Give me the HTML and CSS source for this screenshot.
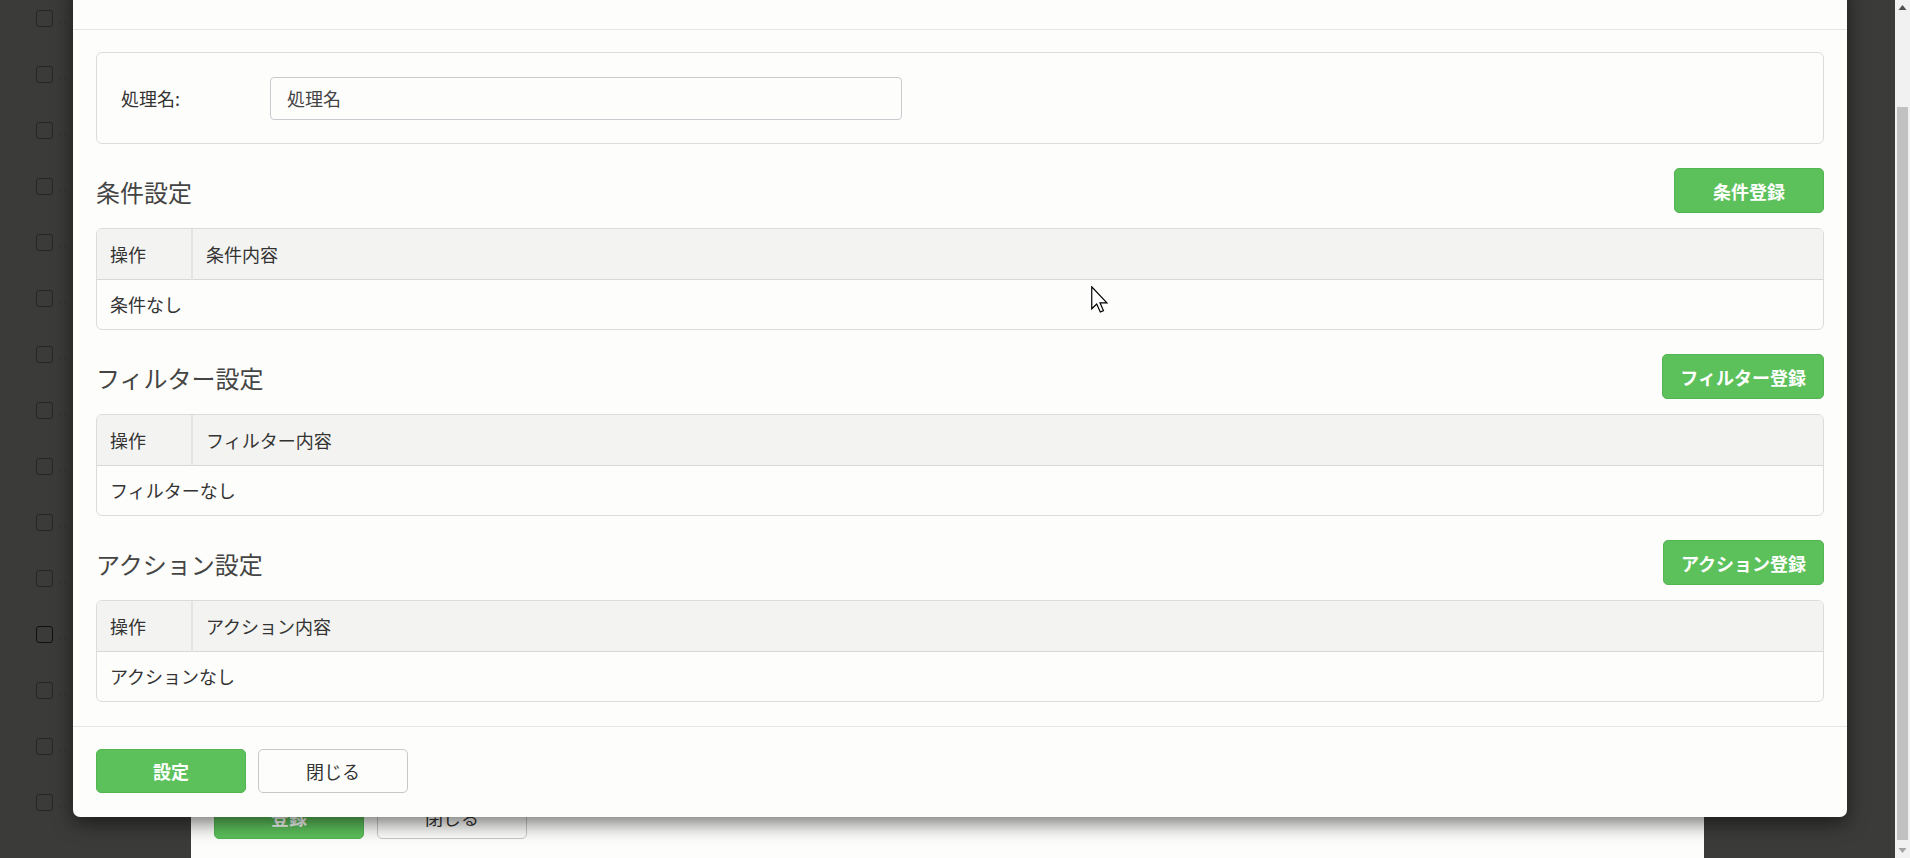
FILE: index.html
```html
<!DOCTYPE html>
<html lang="ja">
<head>
<meta charset="utf-8">
<title>処理設定</title>
<link rel="stylesheet" href="styles.css">
</head>
<body>
<div class="screen">
  <div class="viewport">
    <ul class="bg-list">
      <li><span class="cb"></span><span class="dots">..</span></li>
      <li><span class="cb"></span><span class="dots">..</span></li>
      <li><span class="cb"></span><span class="dots">..</span></li>
      <li><span class="cb"></span><span class="dots">..</span></li>
      <li><span class="cb"></span><span class="dots">..</span></li>
      <li><span class="cb"></span><span class="dots">..</span></li>
      <li><span class="cb"></span><span class="dots">..</span></li>
      <li><span class="cb"></span><span class="dots">..</span></li>
      <li><span class="cb"></span><span class="dots">..</span></li>
      <li><span class="cb"></span><span class="dots">..</span></li>
      <li><span class="cb"></span><span class="dots">..</span></li>
      <li><span class="cb cb-dark"></span><span class="dots">..</span></li>
      <li><span class="cb"></span><span class="dots">..</span></li>
      <li><span class="cb"></span><span class="dots">..</span></li>
      <li><span class="cb"></span><span class="dots">..</span></li>
    </ul>

    <div class="modal-back">
      <div class="back-footer">
        <button class="btn btn-success btn-back">登録</button>
        <button class="btn btn-default btn-back">閉じる</button>
      </div>
    </div>

    <div class="modal">
      <div class="modal-header"></div>
      <div class="modal-body">
        <div class="form-box">
          <label class="form-label" for="name">処理名:</label>
          <input class="form-input" id="name" type="text" value="処理名">
        </div>

        <section class="section">
          <div class="section-head">
            <h4 class="section-title">条件設定</h4>
            <button class="btn btn-success">条件登録</button>
          </div>
          <div class="table-wrap">
            <table class="grid">
              <thead><tr><th class="col-op">操作</th><th>条件内容</th></tr></thead>
              <tbody><tr><td colspan="2">条件なし</td></tr></tbody>
            </table>
          </div>
        </section>

        <section class="section">
          <div class="section-head">
            <h4 class="section-title">フィルター設定</h4>
            <button class="btn btn-success">フィルター登録</button>
          </div>
          <div class="table-wrap">
            <table class="grid">
              <thead><tr><th class="col-op">操作</th><th>フィルター内容</th></tr></thead>
              <tbody><tr><td colspan="2">フィルターなし</td></tr></tbody>
            </table>
          </div>
        </section>

        <section class="section">
          <div class="section-head">
            <h4 class="section-title">アクション設定</h4>
            <button class="btn btn-success">アクション登録</button>
          </div>
          <div class="table-wrap">
            <table class="grid">
              <thead><tr><th class="col-op">操作</th><th>アクション内容</th></tr></thead>
              <tbody><tr><td colspan="2">アクションなし</td></tr></tbody>
            </table>
          </div>
        </section>
      </div>
      <div class="modal-footer">
        <button class="btn btn-success">設定</button>
        <button class="btn btn-default">閉じる</button>
      </div>
    </div>

    <svg class="cursor" width="18" height="27" viewBox="0 0 12 18" aria-hidden="true">
      <path d="M0.5 0.5 L0.5 15.2 L3.8 12 L6.2 17.3 L8.3 16.4 L6 11.2 L10.6 11.2 Z" fill="#fff" stroke="#000" stroke-width="0.8" stroke-linejoin="miter"/>
    </svg>
  </div>

  <div class="scrollbar">
    <div class="sb-arrow">
      <svg width="15" height="15" viewBox="0 0 15 15"><path d="M3.5 10 L7.5 5 L11.5 10 Z" fill="#505050"/></svg>
    </div>
    <div class="sb-track"><div class="sb-thumb"></div></div>
    <div class="sb-arrow">
      <svg width="15" height="15" viewBox="0 0 15 15"><path d="M3.5 5 L7.5 10 L11.5 5 Z" fill="#a3a3a3"/></svg>
    </div>
  </div>
</div>
</body>
</html>
```

FILE: styles.css
```css
* { box-sizing: border-box; }

html, body {
  margin: 0;
  padding: 0;
  width: 1910px;
  height: 858px;
  overflow: hidden;
}

body {
  font-family: "Noto Sans CJK JP", "Noto Sans", sans-serif;
  font-size: 18px;
  color: #333;
  background: #3a3a38;
}

.screen {
  display: flex;
  width: 1910px;
  height: 858px;
}

.viewport {
  position: relative;
  width: 1895px;
  height: 858px;
  overflow: hidden;
  background: #3b3b39;
}

/* background list (dimmed page) */
.bg-list {
  list-style: none;
  margin: 0;
  padding: 10px 0 0 36px;
}

.bg-list li {
  display: flex;
  align-items: flex-start;
  gap: 6px;
  height: 56px;
}

.cb {
  display: block;
  width: 17px;
  height: 17px;
  border: 1.5px solid #262626;
  border-radius: 3px;
}

.cb-dark { border-color: #111; }

.dots {
  font-size: 10px;
  line-height: 17px;
  color: #2a2a2a;
  letter-spacing: 2px;
}

/* modal behind */
.modal-back {
  position: absolute;
  left: 191px;
  top: 700px;
  width: 1513px;
  height: 300px;
  background: #fdfdfb;
  padding-top: 94px;
}

.back-footer {
  display: flex;
  gap: 13px;
  padding-left: 23px;
}

.btn-back { width: 149px; min-width: 0; }

/* front modal */
.modal {
  position: absolute;
  left: 73px;
  top: -20px;
  width: 1774px;
  background: #fdfdfb;
  border-radius: 7px;
  box-shadow: 0 6px 20px rgba(0, 0, 0, 0.55);
}

.modal-header {
  height: 50px;
  border-bottom: 1px solid #e6e6e6;
}

.modal-body {
  padding: 22px 23px 24px;
}

.form-box {
  display: flex;
  align-items: center;
  height: 92px;
  padding: 0 24px;
  border: 1px solid #dcdcdc;
  border-radius: 6px;
  margin-bottom: 24px;
}

.form-label {
  width: 149px;
  color: #333;
  line-height: 1;
}

.form-input {
  width: 632px;
  height: 43px;
  padding: 0 16px;
  border: 1px solid #c9c9d0;
  border-radius: 4px;
  background: #fdfdfb;
  font-family: inherit;
  font-size: 18px;
  color: #444;
  outline: none;
}

.section + .section { margin-top: 24px; }

.section-head {
  display: flex;
  align-items: center;
  justify-content: space-between;
  height: 45px;
  margin-bottom: 15px;
}

.section-title {
  margin: 0;
  font-size: 24px;
  font-weight: 400;
  color: #444;
  line-height: 1;
  padding-top: 3px;
}

.btn {
  height: 45px;
  min-width: 150px;
  padding: 0 17px;
  border-radius: 5px;
  font-family: inherit;
  font-size: 18px;
  line-height: 1;
  cursor: pointer;
}

.btn-success {
  background: #5cc15b;
  border: 1px solid #53b452;
  color: #fff;
  font-weight: 700;
}

.btn-default {
  background: #fdfdfb;
  border: 1px solid #c8c8c8;
  color: #333;
  font-weight: 400;
}

.modal-footer .btn { height: 44px; }

.table-wrap {
  border: 1px solid #dcdcdc;
  border-radius: 6px;
  overflow: hidden;
}

.grid {
  width: 100%;
  border-collapse: collapse;
}

.grid th {
  height: 50px;
  padding: 0 13px;
  text-align: left;
  font-weight: 400;
  color: #333;
  background: #f3f3f1;
  border-bottom: 1px solid #d8d8d8;
}

.grid th.col-op {
  width: 95px;
  border-right: 2px solid #e4e4e4;
}

.grid td {
  height: 50px;
  padding: 0 13px;
  color: #333;
}

.modal-footer {
  display: flex;
  gap: 12px;
  padding: 22px 23px 24px;
  border-top: 1px solid #e6e6e6;
}

.cursor {
  position: absolute;
  left: 1091px;
  top: 286px;
}

/* fake scrollbar */
.scrollbar {
  display: flex;
  flex-direction: column;
  width: 15px;
  height: 858px;
  background: #f1f1f1;
}

.sb-arrow {
  height: 15px;
  flex: none;
}

.sb-arrow svg { display: block; }

.sb-track {
  flex: 1;
  padding: 92px 2px 0;
}

.sb-thumb {
  height: 733px;
  background: #c1c1c1;
}
```
